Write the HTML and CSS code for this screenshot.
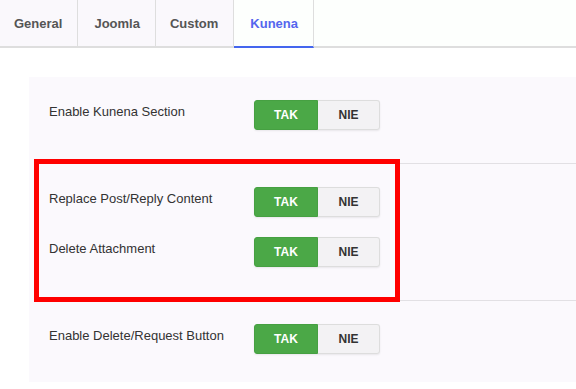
FILE: index.html
```html
<!DOCTYPE html>
<html>
<head>
<meta charset="utf-8">
<link rel="stylesheet" href="styles.css">
</head>
<body>
<div class="tabs">
  <div class="tab">General</div>
  <div class="tab">Joomla</div>
  <div class="tab">Custom</div>
  <div class="tab active">Kunena</div>
  <div class="tab-rest"></div>
</div>
<div class="panel">
  <div class="group">
    <div class="row">
      <div class="label">Enable Kunena Section</div>
      <div class="toggle"><span class="yes">TAK</span><span class="no">NIE</span></div>
    </div>
  </div>
  <div class="group">
    <div class="row">
      <div class="label">Replace Post/Reply Content</div>
      <div class="toggle"><span class="yes">TAK</span><span class="no">NIE</span></div>
    </div>
    <div class="row">
      <div class="label">Delete Attachment</div>
      <div class="toggle"><span class="yes">TAK</span><span class="no">NIE</span></div>
    </div>
  </div>
  <div class="group last">
    <div class="row">
      <div class="label">Enable Delete/Request Button</div>
      <div class="toggle"><span class="yes">TAK</span><span class="no">NIE</span></div>
    </div>
  </div>
</div>
<div class="highlight"></div>
</body>
</html>
```
FILE: styles.css
```css
html, body {
  margin: 0;
  padding: 0;
  background: #ffffff;
  font-family: "Liberation Sans", Arial, sans-serif;
}
body {
  width: 576px;
  height: 389px;
  overflow: hidden;
  position: relative;
}
.tabs {
  display: flex;
  height: 46px;
  border-bottom: 2px solid #dedede;
}
.tab {
  display: flex;
  align-items: center;
  padding: 0 15px 0 14px;
  height: 46px;
  background: #faf8fc;
  border-right: 1px solid #dedede;
  font-size: 13px;
  font-weight: bold;
  color: #555555;
  box-sizing: border-box;
}
.tab:nth-child(2) { padding: 0 15px 0 16px; }
.tab:nth-child(3) { padding: 0 15px 0 14px; }
.tab.active {
  background: #fdfffd;
  color: #5566ee;
  height: 48px;
  margin-bottom: -2px;
  border-bottom: 2px solid #4466ee;
  padding: 0 15px 0 16px;
  border-left: 0;
}
.tab-rest {
  flex: 1;
  background: #fdfffd;
}
.panel {
  margin: 29px 0 0 29px;
  background: #fbf9fd;
  padding: 0 0 0 20px;
}
.group {
  padding: 23px 0 33px;
  border-bottom: 1px solid #e2e0e4;
  display: flex;
  flex-direction: column;
  gap: 20px;
}
.group.last {
  border-bottom: 0;
  padding-bottom: 28px;
}
.row {
  display: flex;
  align-items: flex-start;
}
.label {
  width: 205px;
  padding-top: 4px;
  font-size: 13px;
  line-height: 16px;
  color: #333333;
}
.toggle {
  display: flex;
  height: 30px;
  border-radius: 3px;
  box-shadow: 0 1px 2px rgba(0,0,0,0.08);
  font-size: 12px;
  font-weight: bold;
}
.toggle span {
  display: flex;
  align-items: center;
  justify-content: center;
  box-sizing: border-box;
}
.yes {
  width: 64px;
  background: #4ba847;
  color: #ffffff;
  border-radius: 3px 0 0 3px;
  border: 1px solid #46a042;
}
.no {
  width: 62px;
  background: #f3f2f4;
  color: #333333;
  border: 1px solid #dddddd;
  border-left: 0;
  border-radius: 0 3px 3px 0;
}
.highlight {
  position: absolute;
  left: 34px;
  top: 159px;
  width: 366px;
  height: 143px;
  border: 5px solid #ff0000;
  box-sizing: border-box;
}
```
